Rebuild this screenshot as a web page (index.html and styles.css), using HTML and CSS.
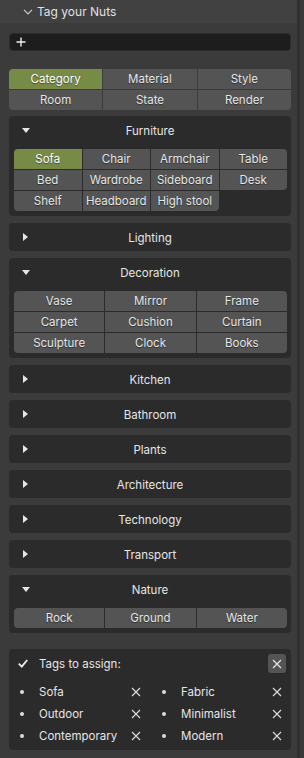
FILE: index.html
```html
<!DOCTYPE html>
<html lang="en">
<head>
    <meta charset="UTF-8">
    <meta name="viewport" content="width=device-width, initial-scale=1.0">
    <title>Tag your Nuts</title>
    <link rel="stylesheet" href="styles.css">
</head>
<body>

<div class="window">
    <div class="main">
        <div class="title">
            <svg class="chev" width="10" height="6" viewBox="0 0 10 6"><polyline points="1,0.8 5,5 9,0.8" fill="none" stroke="#c8c8c8" stroke-width="1.2"/></svg>
            <span>Tag your Nuts</span>
        </div>

        <div class="body">
            <div class="search">
                <svg width="10" height="10" viewBox="0 0 10 10"><path d="M5 0.5V9.5M0.5 5H9.5" stroke="#f0f0f0" stroke-width="1.4"/></svg>
            </div>

            <div class="tabs">
                <div class="btn active tl">Category</div>
                <div class="btn">Material</div>
                <div class="btn tr">Style</div>
                <div class="btn bl">Room</div>
                <div class="btn">State</div>
                <div class="btn br">Render</div>
            </div>

            <!-- Furniture -->
            <div class="panel">
                <div class="panel-head">
                    <svg class="tri" width="8" height="5" viewBox="0 0 8 5"><polygon points="0,0 8,0 4,5" fill="#e6e6e6"/></svg>
                    <span>Furniture</span>
                </div>
                <div class="grid cols4">
                    <div class="btn active tl">Sofa</div>
                    <div class="btn">Chair</div>
                    <div class="btn">Armchair</div>
                    <div class="btn tr">Table</div>
                    <div class="btn">Bed</div>
                    <div class="btn">Wardrobe</div>
                    <div class="btn">Sideboard</div>
                    <div class="btn br">Desk</div>
                    <div class="btn bl">Shelf</div>
                    <div class="btn">Headboard</div>
                    <div class="btn br">High stool</div>
                </div>
            </div>

            <div class="panel">
                <div class="panel-head">
                    <svg class="tri-r" width="5" height="8" viewBox="0 0 5 8"><polygon points="0,0 5,4 0,8" fill="#e6e6e6"/></svg>
                    <span>Lighting</span>
                </div>
            </div>

            <!-- Decoration -->
            <div class="panel">
                <div class="panel-head">
                    <svg class="tri" width="8" height="5" viewBox="0 0 8 5"><polygon points="0,0 8,0 4,5" fill="#e6e6e6"/></svg>
                    <span>Decoration</span>
                </div>
                <div class="grid cols3">
                    <div class="btn tl">Vase</div>
                    <div class="btn">Mirror</div>
                    <div class="btn tr">Frame</div>
                    <div class="btn">Carpet</div>
                    <div class="btn">Cushion</div>
                    <div class="btn">Curtain</div>
                    <div class="btn bl">Sculpture</div>
                    <div class="btn">Clock</div>
                    <div class="btn br">Books</div>
                </div>
            </div>

            <div class="panel">
                <div class="panel-head">
                    <svg class="tri-r" width="5" height="8" viewBox="0 0 5 8"><polygon points="0,0 5,4 0,8" fill="#e6e6e6"/></svg>
                    <span>Kitchen</span>
                </div>
            </div>
            <div class="panel">
                <div class="panel-head">
                    <svg class="tri-r" width="5" height="8" viewBox="0 0 5 8"><polygon points="0,0 5,4 0,8" fill="#e6e6e6"/></svg>
                    <span>Bathroom</span>
                </div>
            </div>
            <div class="panel">
                <div class="panel-head">
                    <svg class="tri-r" width="5" height="8" viewBox="0 0 5 8"><polygon points="0,0 5,4 0,8" fill="#e6e6e6"/></svg>
                    <span>Plants</span>
                </div>
            </div>
            <div class="panel">
                <div class="panel-head">
                    <svg class="tri-r" width="5" height="8" viewBox="0 0 5 8"><polygon points="0,0 5,4 0,8" fill="#e6e6e6"/></svg>
                    <span>Architecture</span>
                </div>
            </div>
            <div class="panel">
                <div class="panel-head">
                    <svg class="tri-r" width="5" height="8" viewBox="0 0 5 8"><polygon points="0,0 5,4 0,8" fill="#e6e6e6"/></svg>
                    <span>Technology</span>
                </div>
            </div>
            <div class="panel">
                <div class="panel-head">
                    <svg class="tri-r" width="5" height="8" viewBox="0 0 5 8"><polygon points="0,0 5,4 0,8" fill="#e6e6e6"/></svg>
                    <span>Transport</span>
                </div>
            </div>

            <!-- Nature -->
            <div class="panel">
                <div class="panel-head">
                    <svg class="tri" width="8" height="5" viewBox="0 0 8 5"><polygon points="0,0 8,0 4,5" fill="#e6e6e6"/></svg>
                    <span>Nature</span>
                </div>
                <div class="grid cols3">
                    <div class="btn tl bl">Rock</div>
                    <div class="btn">Ground</div>
                    <div class="btn tr br">Water</div>
                </div>
            </div>

            <!-- Tags to assign -->
            <div class="tags">
                <div class="tags-head">
                    <svg class="check" width="10" height="9" viewBox="0 0 10 9"><polyline points="0.8,4.6 3.8,7.6 9.2,1" fill="none" stroke="#eeeeee" stroke-width="1.8"/></svg>
                    <span class="tags-title">Tags to assign:</span>
                    <div class="close">
                        <svg width="10" height="10" viewBox="0 0 10 10"><path d="M1 1L9 9M9 1L1 9" stroke="#e6e6e6" stroke-width="1.2"/></svg>
                    </div>
                </div>
                <div class="tag-list">
                    <div class="tag"><span class="dot"></span><span class="label">Sofa</span><svg class="x" width="10" height="10" viewBox="0 0 10 10"><path d="M1 1L9 9M9 1L1 9" stroke="#dddddd" stroke-width="1.1"/></svg></div>
                    <div class="tag"><span class="dot"></span><span class="label">Fabric</span><svg class="x" width="10" height="10" viewBox="0 0 10 10"><path d="M1 1L9 9M9 1L1 9" stroke="#dddddd" stroke-width="1.1"/></svg></div>
                    <div class="tag"><span class="dot"></span><span class="label">Outdoor</span><svg class="x" width="10" height="10" viewBox="0 0 10 10"><path d="M1 1L9 9M9 1L1 9" stroke="#dddddd" stroke-width="1.1"/></svg></div>
                    <div class="tag"><span class="dot"></span><span class="label">Minimalist</span><svg class="x" width="10" height="10" viewBox="0 0 10 10"><path d="M1 1L9 9M9 1L1 9" stroke="#dddddd" stroke-width="1.1"/></svg></div>
                    <div class="tag"><span class="dot"></span><span class="label">Contemporary</span><svg class="x" width="10" height="10" viewBox="0 0 10 10"><path d="M1 1L9 9M9 1L1 9" stroke="#dddddd" stroke-width="1.1"/></svg></div>
                    <div class="tag"><span class="dot"></span><span class="label">Modern</span><svg class="x" width="10" height="10" viewBox="0 0 10 10"><path d="M1 1L9 9M9 1L1 9" stroke="#dddddd" stroke-width="1.1"/></svg></div>
                </div>
            </div>
        </div>
    </div>
    <div class="edge"></div>
</div>

</body>
</html>
```

FILE: styles.css
```css
body {
    margin: 0;
    padding: 0;
    background-color: #3b3b3b;
    font-family: Inter, "DejaVu Sans", sans-serif;
    font-size: 11.5px;
    color: #e6e6e6;
}
.window {
    display: flex;
    width: 304px;
    height: 758px;
    overflow: hidden;
}
.main {
    width: 297px;
}
.edge {
    width: 4px;
    border-left: 3px solid #303030;
    background-color: #3a3a3a;
}

.title {
    display: flex;
    align-items: center;
    height: 23px;
    padding-left: 23px;
    background-color: #414141;
    font-size: 12px;
    color: #e0e0e0;
}
.chev {
    margin-right: 4px;
}

.body {
    padding: 0 6px 0 9px;
}
.search {
    box-sizing: border-box;
    display: flex;
    align-items: center;
    height: 18px;
    margin-top: 10px;
    padding-left: 6px;
    background-color: #1d1d1d;
    border: 1px solid #2c2c2c;
    border-radius: 4px;
}

.tabs {
    display: grid;
    grid-template-columns: repeat(3, 1fr);
    grid-auto-rows: 20px;
    gap: 1px;
    margin-top: 18px;
    margin-bottom: 6px;
}
.btn {
    display: flex;
    align-items: center;
    justify-content: center;
    background-color: #545454;
    color: #e6e6e6;
    text-shadow: 0 1px 1px rgba(0, 0, 0, 0.45);
    white-space: nowrap;
}
.btn.active {
    background-color: #778b47;
    color: #ffffff;
}
.tl { border-top-left-radius: 4px; }
.tr { border-top-right-radius: 4px; }
.bl { border-bottom-left-radius: 4px; }
.br { border-bottom-right-radius: 4px; }

.panel {
    background-color: #2b2b2b;
    border-radius: 4px;
    margin-bottom: 7px;
}
.panel-head {
    position: relative;
    display: flex;
    align-items: center;
    justify-content: center;
    height: 28px;
}
.panel-head span {
    padding-top: 1px;
}
.panel-head svg {
    position: absolute;
    left: 13px;
}
.panel-head .tri-r {
    left: 14px;
}
.grid {
    display: grid;
    grid-auto-rows: 20px;
    gap: 1px;
    padding: 5px 4px 5px 5px;
}
.cols4 {
    grid-template-columns: repeat(4, 1fr);
}
.cols3 {
    grid-template-columns: repeat(3, 1fr);
}

.tags {
    background-color: #2b2b2b;
    border-radius: 4px;
    margin-top: 16px;
    padding: 5px 5px 3px 9px;
}
.tags-head {
    display: flex;
    align-items: center;
    height: 19px;
    margin-bottom: 8px;
}
.check {
    width: 10px;
}
.tags-title {
    flex: 1;
    margin-left: 11px;
    padding-top: 1px;
}
.close {
    display: flex;
    align-items: center;
    justify-content: center;
    width: 18px;
    height: 19px;
    background-color: #545454;
    border-radius: 3px;
}
.tag-list {
    display: grid;
    grid-template-columns: 142px 1fr;
    grid-auto-rows: 22px;
}
.tag {
    display: flex;
    align-items: center;
}
.dot {
    width: 8px;
    display: flex;
    justify-content: center;
}
.dot::before {
    content: "";
    width: 4px;
    height: 4px;
    border-radius: 50%;
    background-color: #dddddd;
}
.label {
    flex: 1;
    margin-left: 13px;
}
.tag .x {
    margin-right: 19px;
}
.tag:nth-child(2n) .x {
    margin-right: 4px;
}
```
